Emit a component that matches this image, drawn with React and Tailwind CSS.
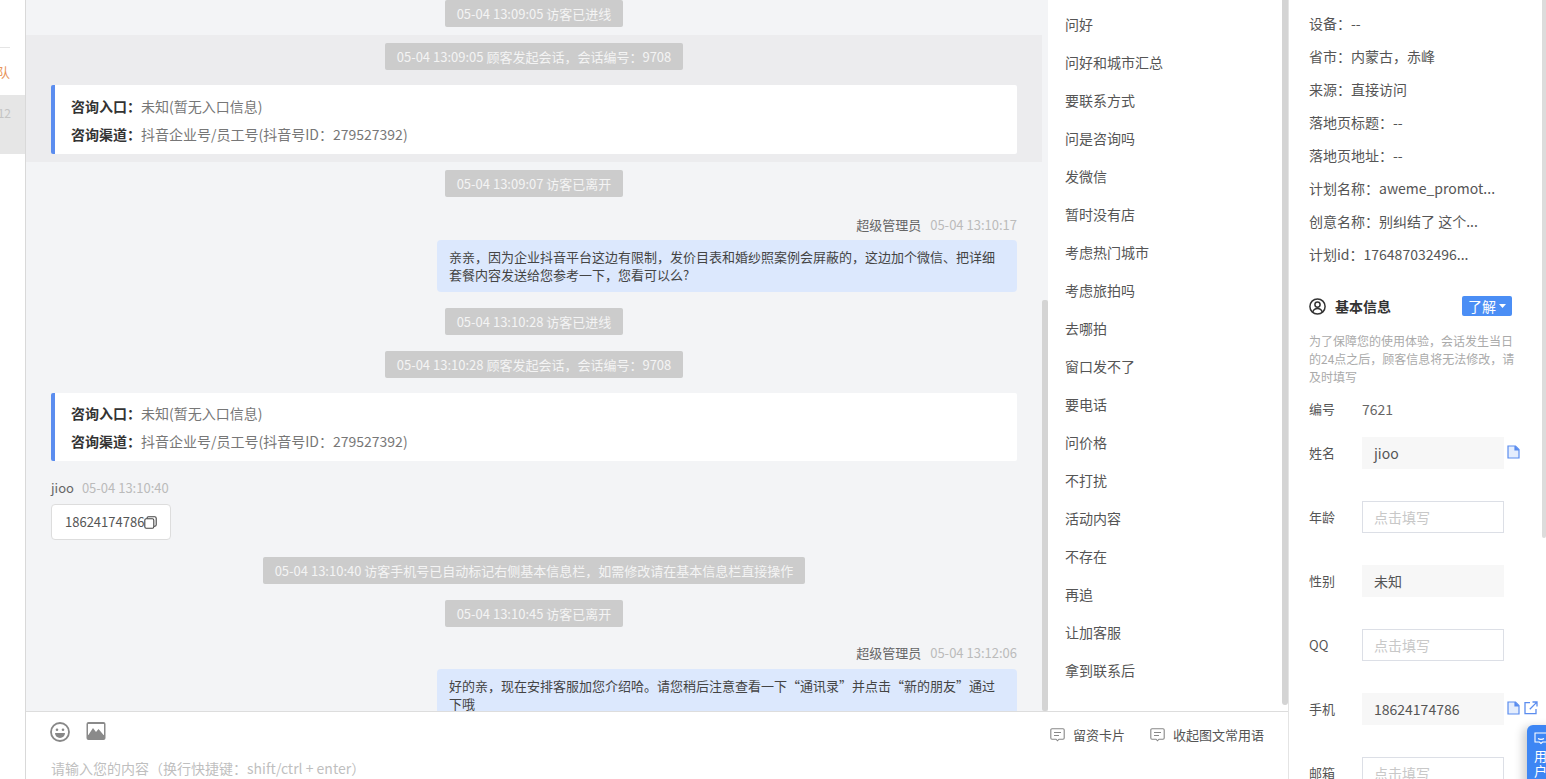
import React from "react";

const FONT = { fontFamily: '"Noto Sans CJK SC", "Noto Sans", sans-serif' };

function Pill({ children, className = "" }) {
  return (
    <div className={`flex justify-center ${className}`}>
      <div className="h-[27px] px-[12px] flex items-center bg-[#cccccc] text-[#f4f4f4] text-[13px] rounded-[2px] whitespace-nowrap">
        {children}
      </div>
    </div>
  );
}

function EntryCard({ className = "", h = "h-[69px]" }) {
  return (
    <div className={`mx-[25px] ${h} bg-white border-l-[4px] border-[#5b8def] rounded-[2px] pl-[16px] flex flex-col justify-center text-[14px] leading-[28px] ${className}`}>
      <div className="text-[#777777]"><span className="font-bold text-[#333333]">咨询入口：</span>未知(暂无入口信息)</div>
      <div className="text-[#777777]"><span className="font-bold text-[#333333]">咨询渠道：</span>抖音企业号/员工号(抖音号ID：279527392)</div>
    </div>
  );
}

function Meta({ name, time, className = "" }) {
  return (
    <div className={`mx-[25px] h-[16px] flex items-center justify-end gap-[9px] text-[13px] ${className}`}>
      <span className="text-[#666666]">{name}</span>
      <span className="text-[#bbbbbb]">{time}</span>
    </div>
  );
}

function Bubble({ children, className = "" }) {
  return (
    <div className={`flex justify-end mx-[25px] ${className}`}>
      <div className="bg-[#dce8fd] rounded-[4px] px-[12px] py-[8px] text-[13px] leading-[18px] text-[#444444] max-w-[580px]">
        {children}
      </div>
    </div>
  );
}

function ChatMessages() {
  return (
    <div className="w-[1016px] shrink-0 overflow-hidden">
      <Pill>05-04 13:09:05 访客已进线</Pill>
      <div className="mt-[8px] pt-[8px] pb-[8px] bg-[#ececee]">
        <Pill>05-04 13:09:05 顾客发起会话，会话编号：9708</Pill>
        <EntryCard className="mt-[15px]" />
      </div>
      <Pill className="mt-[8px]">05-04 13:09:07 访客已离开</Pill>
      <Meta className="mt-[20px]" name="超级管理员" time="05-04 13:10:17" />
      <Bubble className="mt-[7px]">
        亲亲，因为企业抖音平台这边有限制，发价目表和婚纱照案例会屏蔽的，这边加个微信、把详细套餐内容发送给您参考一下，您看可以么?
      </Bubble>
      <Pill className="mt-[16px]">05-04 13:10:28 访客已进线</Pill>
      <Pill className="mt-[16px]">05-04 13:10:28 顾客发起会话，会话编号：9708</Pill>
      <EntryCard className="mt-[15px]" h="h-[68px]" />
      <div className="mx-[25px] mt-[19px] h-[16px] flex items-center gap-[8px] text-[13px]">
        <span className="text-[#666666]">jioo</span>
        <span className="text-[#bbbbbb]">05-04 13:10:40</span>
      </div>
      <div className="mx-[25px] mt-[8px] flex">
        <div className="h-[36px] bg-white border border-[#dddddd] rounded-[4px] pl-[13px] pr-[13px] flex items-center text-[13px] text-[#555555]">
          18624174786
          <svg width="13" height="13" viewBox="0 0 13 13" fill="none" stroke="#444444" strokeWidth="1.1">
            <rect x="0.8" y="2.8" width="9" height="9.4" rx="1.4" />
            <path d="M3 2.6V2.2A1.4 1.4 0 0 1 4.4.8h6.4a1.4 1.4 0 0 1 1.4 1.4v6.6a1.4 1.4 0 0 1-1.4 1.4H10" />
          </svg>
        </div>
      </div>
      <Pill className="mt-[17px]">05-04 13:10:40 访客手机号已自动标记右侧基本信息栏，如需修改请在基本信息栏直接操作</Pill>
      <Pill className="mt-[16px]">05-04 13:10:45 访客已离开</Pill>
      <Meta className="mt-[18px]" name="超级管理员" time="05-04 13:12:06" />
      <Bubble className="mt-[8px]">好的亲，现在安排客服加您介绍哈。请您稍后注意查看一下“通讯录”并点击“新的朋友”通过下哦</Bubble>
    </div>
  );
}

const phrases = ["问好", "问好和城市汇总", "要联系方式", "问是咨询吗", "发微信", "暂时没有店", "考虑热门城市", "考虑旅拍吗", "去哪拍", "窗口发不了", "要电话", "问价格", "不打扰", "活动内容", "不存在", "再追", "让加客服", "拿到联系后"];

function NoteIcon() {
  return (
    <svg width="15" height="14" viewBox="0 0 15 14" fill="none" stroke="#888888" strokeWidth="1.1">
      <path d="M2 .8h11a1.2 1.2 0 0 1 1.2 1.2v8a1.2 1.2 0 0 1-1.2 1.2H9l-1.5 1.6L6 11.2H2A1.2 1.2 0 0 1 .8 10V2A1.2 1.2 0 0 1 2 .8Z" />
      <path d="M4 4.5h7M4 7.5h5" />
    </svg>
  );
}

function DocIcon() {
  return (
    <svg width="13" height="14" viewBox="0 0 13 14" fill="#e4edfd" stroke="#5b8def" strokeWidth="1.2">
      <path d="M1 1h7.5L12 4.5V13H1Z" />
      <path d="M8 1v4h4" fill="#5b8def" />
    </svg>
  );
}

function LinkIcon() {
  return (
    <svg width="14" height="14" viewBox="0 0 14 14" fill="none" stroke="#5b8def" strokeWidth="1.3">
      <path d="M6 1.6H1v11h11V8" />
      <path d="M5.8 8.2 12.4 1.6M8.5 1h4.5v4.5" />
    </svg>
  );
}

function Field({ label, value, placeholder, icons, className = "mt-[32px]" }) {
  return (
    <div className={`flex items-center h-[32px] ${className}`}>
      <div className="w-[53px] shrink-0 text-[13px] text-[#555555]">{label}</div>
      {value ? (
        <div className="w-[142px] h-[32px] bg-[#f7f7f7] pl-[12px] flex items-center text-[14px] text-[#555555]">{value}</div>
      ) : (
        <div className="w-[142px] h-[32px] border border-[#dcdfe6] bg-white pl-[11px] flex items-center text-[14px] text-[#c8c8c8]">{placeholder}</div>
      )}
      {icons && <div className="flex items-center gap-[4px] ml-[3px] -mt-[2px]">{icons}</div>}
    </div>
  );
}

const infos = ["设备：--", "省市：内蒙古，赤峰", "来源：直接访问", "落地页标题：--", "落地页地址：--", "计划名称：aweme_promot...", "创意名称：别纠结了 这个...", "计划id：176487032496..."];

export default function App() {
  return (
    <div className="flex h-screen w-full overflow-hidden bg-white" style={FONT}>
      <aside className="w-[26px] shrink-0 border-r border-[#d9d9d9] overflow-hidden flex flex-col">
        <div className="mt-[47px] w-[10px] h-px bg-[#e5e5e5]" />
        <div className="h-[47px] flex items-center justify-end pr-[15px] text-[13px] text-[#e8935a] whitespace-nowrap">团队</div>
        <div className="h-[59px] bg-[#e6e6e6] flex justify-end pr-[14px] pt-[9px] text-[12px] leading-[18px] text-[#c4c4c4]">12</div>
      </aside>

      <main className="w-[1262px] shrink-0 flex flex-col border-r border-[#e4e4e4] box-content">
        <div className="h-[711px] shrink-0 flex overflow-hidden">
          <div className="flex bg-[#f3f4f6]">
            <ChatMessages />
            <div className="w-[6px] pt-[300px]">
              <div className="h-[411px] bg-[#d4d4d4] rounded-[2px]" />
            </div>
          </div>
          <div className="w-[234px] shrink-0 pl-[17px] pt-[5px]">
            {phrases.map((p) => (
              <div key={p} className="h-[38px] flex items-center text-[14px] text-[#555555]">{p}</div>
            ))}
          </div>
          <div className="w-[6px]">
            <div className="h-[705px] bg-[#d4d4d4] rounded-b-[3px]" />
          </div>
        </div>
        <div className="flex-1 border-t border-[#dddddd] pl-[25px] pr-[24px] relative">
          <div className="flex justify-between">
            <div className="flex items-center gap-[16px] pt-[8px]">
              <svg width="20" height="20" viewBox="0 0 20 20" className="ml-[-1px]">
                <circle cx="10" cy="10" r="9" fill="none" stroke="#888888" strokeWidth="1.8" />
                <circle cx="7" cy="7.8" r="1.3" fill="#888888" />
                <circle cx="13" cy="7.8" r="1.3" fill="#888888" />
                <path d="M5 11h10a5 5 0 0 1-10 0Z" fill="#888888" />
              </svg>
              <svg width="20" height="18" viewBox="0 0 20 18" className="-mt-[2px]">
                <rect x="0.5" y="0" width="19" height="18" rx="2" fill="#8a8a8a" />
                <rect x="2" y="2" width="16" height="11" fill="#ffffff" />
                <path d="M2 13.5 7 6l3 4 2.5-3 5.5 6.5V16H2Z" fill="#8a8a8a" />
              </svg>
            </div>
            <div className="flex items-center gap-[25px] pt-[13px] text-[13px] text-[#555555]">
              <div className="flex items-center gap-[8px]"><NoteIcon />留资卡片</div>
              <div className="flex items-center gap-[8px]"><NoteIcon />收起图文常用语</div>
            </div>
          </div>
          <div className="mt-[13px] text-[14px] leading-[20px] text-[#bfbfbf]">请输入您的内容（换行快捷键：shift/ctrl + enter）</div>
        </div>
      </main>

      <section className="flex-1 min-w-0 relative flex overflow-hidden">
        <div className="flex-1 min-w-0 pl-[20px] pt-[7px]">
          {infos.map((t) => (
            <div key={t} className="h-[33px] flex items-center text-[14px] text-[#555555] whitespace-nowrap">{t}</div>
          ))}
          <div className="mt-[25px] h-[20px] w-[203px] flex items-center justify-between">
            <div className="flex items-center gap-[9px] text-[14px] font-bold text-[#333333]">
              <svg width="17" height="17" viewBox="0 0 17 17" fill="none" stroke="#333333" strokeWidth="1.5">
                <circle cx="8.5" cy="8.5" r="7.6" />
                <circle cx="8.5" cy="6.6" r="2.6" />
                <path d="M3.8 14c.8-2.4 2.6-3.4 4.7-3.4s3.900 1 4.700 3.400" />
              </svg>
              基本信息
            </div>
            <div className="w-[50px] h-[20px] bg-[#4b8ef5] rounded-[2px] flex items-center justify-center gap-[3px] text-[14px] text-white">
              了解
              <svg width="7" height="4" viewBox="0 0 7 4"><path d="M0 0h7L3.500 4Z" fill="#ffffff" /></svg>
            </div>
          </div>
          <div className="mt-[16px] w-[206px] text-[12px] leading-[18px] text-[#aaaaaa]">
            为了保障您的使用体验，会话发生当日的24点之后，顾客信息将无法修改，请及时填写
          </div>
          <div className="mt-[13px] h-[20px] flex items-center text-[13px] text-[#555555]">
            <div className="w-[53px]">编号</div>
            <div className="text-[14px] text-[#666666]">7621</div>
          </div>
          <Field className="mt-[18px]" label="姓名" value="jioo" icons={<DocIcon />} />
          <Field label="年龄" placeholder="点击填写" />
          <Field label="性别" value="未知" />
          <Field label="QQ" placeholder="点击填写" />
          <Field label="手机" value="18624174786" icons={<><DocIcon /><LinkIcon /></>} />
          <Field label="邮箱" placeholder="点击填写" />
        </div>
        <div className="w-[4px] shrink-0">
          <div className="h-[538px] bg-[#dcdcdc] rounded-b-[2px]" />
        </div>
        <div className="absolute left-[238px] top-[725px] w-[30px] h-[70px] bg-[#3d86f4] rounded-tl-[6px] shadow-[-4px_2px_10px_rgba(0,0,0,0.2)] pl-[7px] pt-[7px] text-[13px] leading-[15px] text-white">
          <svg width="14" height="13" viewBox="0 0 14 13" fill="none" stroke="#ffffff" strokeWidth="1.1">
            <path d="M1 1h12v9H8.500L7 11.500 5.500 10H1Z" />
            <path d="M4 6.500c1.500 1.200 4.500 1.200 6 0" />
          </svg>
          <div className="mt-[3px] w-[13px]">用户</div>
        </div>
      </section>
    </div>
  );
}
